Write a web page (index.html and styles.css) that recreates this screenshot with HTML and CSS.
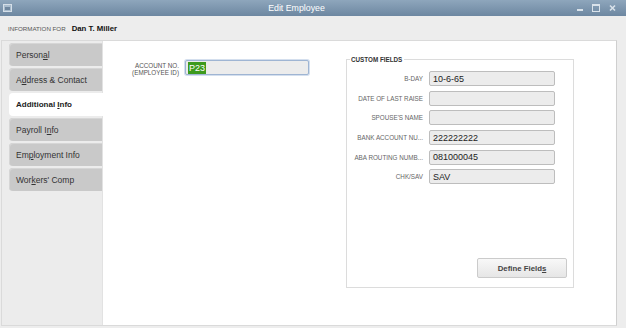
FILE: index.html
```html
<!DOCTYPE html>
<html lang="en">
<head>
    <meta charset="UTF-8">
    <title>Edit Employee</title>
    <link rel="stylesheet" href="styles.css">
</head>
<body>

<div class="titlebar">
    <svg class="win-icon" width="9" height="8" viewBox="0 0 9 8">
        <rect x="0.5" y="0.5" width="8" height="7" fill="#a9bccd" stroke="#d5dfe8"/>
        <rect x="2" y="3" width="5" height="3" fill="#6f879f"/>
    </svg>
    <div class="title">Edit Employee</div>
    <div class="controls">
        <svg width="7" height="8" viewBox="0 0 7 8"><rect x="0" y="5" width="6" height="2" fill="#d9e2ea"/></svg>
        <svg width="9" height="8" viewBox="0 0 9 8"><rect x="0.5" y="0.5" width="7" height="7" fill="none" stroke="#d9e2ea"/><rect x="0.5" y="0.5" width="7" height="1.5" fill="#d9e2ea"/></svg>
        <svg width="7" height="8" viewBox="0 0 7 8"><path d="M1 1.5 L6 6.5 M6 1.5 L1 6.5" stroke="#d9e2ea" stroke-width="1.6"/></svg>
    </div>
</div>

<div class="info">
    <span class="info-label">INFORMATION FOR</span>
    <span class="info-name">Dan T. Miller</span>
</div>

<div class="panel">
    <nav class="tabs">
        <div class="tab"><span>Person<u>a</u>l</span></div>
        <div class="tab"><span>A<u>d</u>dress &amp; Contact</span></div>
        <div class="tab active"><span>Additional <u>I</u>nfo</span></div>
        <div class="tab"><span>Payroll I<u>n</u>fo</span></div>
        <div class="tab"><span>Em<u>p</u>loyment Info</span></div>
        <div class="tab"><span>Wor<u>k</u>ers' Comp</span></div>
    </nav>

    <div class="content">
        <div class="account-row">
            <div class="account-label">ACCOUNT NO.<br>(EMPLOYEE ID)</div>
            <div class="field account-field"><span class="selected">P23</span></div>
        </div>

        <fieldset class="custom">
            <legend>CUSTOM FIELDS</legend>
            <div class="rows">
                <div class="row"><div class="row-label">B-DAY</div><div class="field">10-6-65</div></div>
                <div class="row"><div class="row-label">DATE OF LAST RAISE</div><div class="field"></div></div>
                <div class="row"><div class="row-label">SPOUSE'S NAME</div><div class="field"></div></div>
                <div class="row"><div class="row-label">BANK ACCOUNT NU...</div><div class="field">222222222</div></div>
                <div class="row"><div class="row-label">ABA ROUTING NUMB...</div><div class="field">081000045</div></div>
                <div class="row"><div class="row-label">CHK/SAV</div><div class="field">SAV</div></div>
            </div>
            <div class="actions">
                <button class="btn">Define Field<u>s</u></button>
            </div>
        </fieldset>
    </div>
</div>

</body>
</html>
```

FILE: styles.css
```css
body {
    margin: 0;
    width: 626px;
    height: 328px;
    overflow: hidden;
    background-color: #ededed;
    font-family: 'Liberation Sans', Arial, sans-serif;
    color: #333;
}

/* Window title bar */
.titlebar {
    height: 16px;
    display: flex;
    align-items: center;
    background: linear-gradient(#8ea6bc, #6d87a1);
    color: #fff;
}

.win-icon {
    margin-left: 3px;
    margin-right: 4px;
}

.title {
    flex: 1;
    text-align: center;
    font-size: 8.8px;
}

.controls {
    display: flex;
    align-items: center;
    gap: 8px;
    margin-right: 10px;
}

/* Employee header */
.info {
    height: 24px;
    display: flex;
    align-items: center;
    padding-left: 8px;
    box-sizing: border-box;
}

.info-label {
    font-size: 6.2px;
    color: #555;
    margin-right: 6px;
}

.info-name {
    font-size: 7.8px;
    font-weight: bold;
    color: #111;
}

/* Main panel */
.panel {
    display: flex;
    margin-left: 1px;
    width: 616px;
    height: 286px;
    box-sizing: border-box;
    border: 1px solid #dadada;
    border-right-color: #cfcfcf;
    background-color: #fff;
}

.tabs {
    width: 100px;
    flex-shrink: 0;
    display: flex;
    flex-direction: column;
    gap: 2px;
    padding-top: 2px;
    background-color: #ececec;
    border-right: 1px solid #e2e2e2;
}

.tab {
    height: 23px;
    margin-left: 7px;
    padding-left: 7px;
    display: flex;
    align-items: center;
    background-color: #c9c9c9;
    border-radius: 4px 0 0 4px;
    box-shadow: inset 1px 1px 0 #d6d6d6;
    font-size: 8.5px;
    color: #333;
}

.tab.active {
    margin-right: -1px;
    background-color: #fff;
    box-shadow: none;
    font-size: 8px;
    font-weight: bold;
    color: #222;
}

.content {
    flex: 1;
    display: flex;
    align-items: flex-start;
    padding-top: 15px;
}

/* Account number */
.account-row {
    display: flex;
    align-items: flex-start;
    margin-top: 4px;
}

.account-label {
    width: 76px;
    text-align: right;
    font-size: 6.3px;
    line-height: 7px;
    color: #555;
    padding-top: 2px;
}

.field {
    height: 15px;
    box-sizing: border-box;
    border: 1px solid #bdbdbd;
    border-radius: 2px;
    background-color: #ececec;
    padding-left: 3px;
    display: flex;
    align-items: center;
    font-size: 9px;
    color: #222;
}

.account-field {
    width: 124px;
    margin-left: 6px;
    border-color: #9fb5d3;
    box-shadow: 0 0 0 1px #d4dfee;
    padding-left: 2px;
}

.selected {
    background-color: #3d9a1d;
    color: #fff;
    padding: 1px 1px;
    line-height: 10px;
}

/* Custom fields group */
.custom {
    margin: 0 0 0 37px;
    width: 228px;
    height: 232px;
    box-sizing: border-box;
    border: 1px solid #dcdcdc;
    padding: 0 6px 0 3px;
    display: flex;
    flex-direction: column;
}

.custom legend {
    font-size: 6.3px;
    font-weight: bold;
    color: #333;
    padding: 0 2px 0 1px;
}

.rows {
    display: flex;
    flex-direction: column;
    gap: 4.7px;
    margin-top: 8px;
}

.row {
    display: flex;
    align-items: center;
}

.row-label {
    width: 73px;
    text-align: right;
    font-size: 6.3px;
    color: #666;
    white-space: nowrap;
}

.row .field {
    width: 126px;
    margin-left: 6px;
}

.actions {
    margin-top: auto;
    margin-bottom: 9px;
    display: flex;
    justify-content: flex-end;
}

.btn {
    width: 90px;
    height: 20px;
    border: 1px solid #cbcbcb;
    border-radius: 2px;
    background: linear-gradient(#f8f8f8, #e6e6e6);
    font-family: 'Liberation Sans', Arial, sans-serif;
    font-size: 7.8px;
    font-weight: bold;
    color: #444;
    padding: 0;
}
```
